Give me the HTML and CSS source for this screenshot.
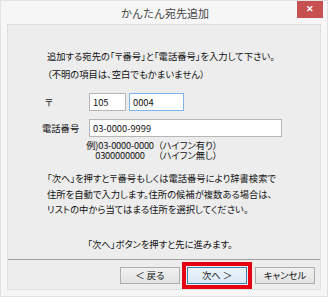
FILE: index.html
```html
<html lang="ja">
<head>
    <meta charset="UTF-8">
    <meta name="viewport" content="width=device-width, initial-scale=1.0">
    <title>かんたん宛先追加</title>
    <link rel="stylesheet" href="styles.css">
</head>
<body>
<div class="window">
    <div class="titlebar">
        <span class="title">かんたん宛先追加</span>
        <span class="close">&#x2715;</span>
    </div>

    <div class="client">
        <p class="lead">追加する宛先の「〒番号」と「電話番号」を入力して下さい。</p>
        <p class="lead sub">（不明の項目は、空白でもかまいません）</p>

        <div class="form">
            <label class="zip-label">〒</label>
            <div class="zip">
                <input type="text" class="zip1" value="105">
                <input type="text" class="zip2 focused" value="0004">
            </div>
            <label class="tel-label">電話番号</label>
            <input type="text" class="tel" value="03-0000-9999">
        </div>

        <div class="example">
            <span class="ex-num">例)03-0000-0000</span><span>（ハイフン有り）</span>
            <span class="ex-num">0300000000</span><span>（ハイフン無し）</span>
        </div>

        <p class="note">「次へ」を押すと〒番号もしくは電話番号により辞書検索で<br>住所を自動で入力します。住所の候補が複数ある場合は、<br>リストの中から当てはまる住所を選択してください。</p>

        <p class="next">「次へ」ボタンを押すと先に進みます。</p>

        <div class="footer">
            <button class="btn">＜ 戻る</button>
            <span class="mark"><button class="btn default">次へ ＞</button></span>
            <button class="btn">キャンセル</button>
        </div>
    </div>
</div>
</body>
</html>
```

FILE: styles.css
```css
body {
    margin: 0;
    padding: 0;
    background-color: #f6f6f6;
    font-family: "Noto Sans CJK JP", sans-serif;
    color: #111;
}

.window {
    width: 328px;
    height: 297px;
    box-sizing: border-box;
    background-color: #f6f6f6;
    border: 1px solid #e2e2e2;
    overflow: hidden;
}

.titlebar {
    height: 23px;
    position: relative;
    text-align: center;
}

.title {
    display: inline-block;
    font-size: 11px;
    line-height: 25px;
    color: #444;
    padding-left: 2px;
}

.close {
    position: absolute;
    top: -1px;
    right: 4px;
    width: 26px;
    height: 18px;
    background-color: #c75050;
    color: #fff;
    font-size: 9px;
    line-height: 18px;
    text-align: center;
    font-weight: bold;
}

.client {
    margin: 0 6px;
    height: 266px;
    box-sizing: border-box;
    background-color: #ededed;
    border: 1px dotted #d2d2d2;
    font-size: 9.3px;
    font-feature-settings: "palt";
}

p {
    margin: 0;
}

.lead {
    padding-left: 39px;
    line-height: 18px;
    white-space: nowrap;
}

.lead:first-child {
    margin-top: 22px;
}

.form {
    display: grid;
    grid-template-columns: 47px auto;
    row-gap: 8px;
    margin: 10px 0 0 34px;
    align-items: center;
}

.zip {
    display: flex;
    gap: 3px;
}

input {
    font-family: "Noto Sans CJK JP", sans-serif;
    font-size: 9.3px;
    height: 18px;
    box-sizing: border-box;
    border: 1px solid #b6b6b6;
    background-color: #fff;
    padding: 0 3px;
    margin: 0;
    color: #111;
    outline: none;
}

.zip-label {
    padding-left: 3px;
}

.zip1 {
    width: 37px;
}

.zip2 {
    width: 55px;
}

.focused {
    border-color: #7eb4ea;
}

.tel {
    width: 193px;
}

.example {
    display: grid;
    grid-template-columns: 76px auto;
    margin: 3px 0 0 74px;
    line-height: 10px;
    white-space: nowrap;
}

.ex-num {
    text-align: center;
    letter-spacing: -0.2px;
}

.note {
    margin: 11px 0 0 39px;
    line-height: 15.5px;
    white-space: nowrap;
}

.next {
    margin-top: 19px;
    text-align: center;
    padding-right: 8px;
    line-height: 15px;
}

.footer {
    margin-top: 7px;
    border-top: 1px solid #a0a0a0;
    display: flex;
    justify-content: flex-end;
    align-items: center;
    padding: 2px 5px 0 0;
}

.btn {
    font-family: "Noto Sans CJK JP", sans-serif;
    font-size: 9.3px;
    width: 60px;
    height: 17px;
    padding: 0;
    border: 1px solid #adadad;
    background: linear-gradient(#f0f0f0, #e3e3e3);
    color: #111;
    font-feature-settings: "palt";
}

.btn.default {
    border-color: #3c7fb1;
    background: linear-gradient(#eaf3fb, #dbe9f6);
}

.mark {
    border: 4px solid #e60012;
    padding: 1px;
    margin: 0 3px 0 2px;
    display: flex;
}
```
